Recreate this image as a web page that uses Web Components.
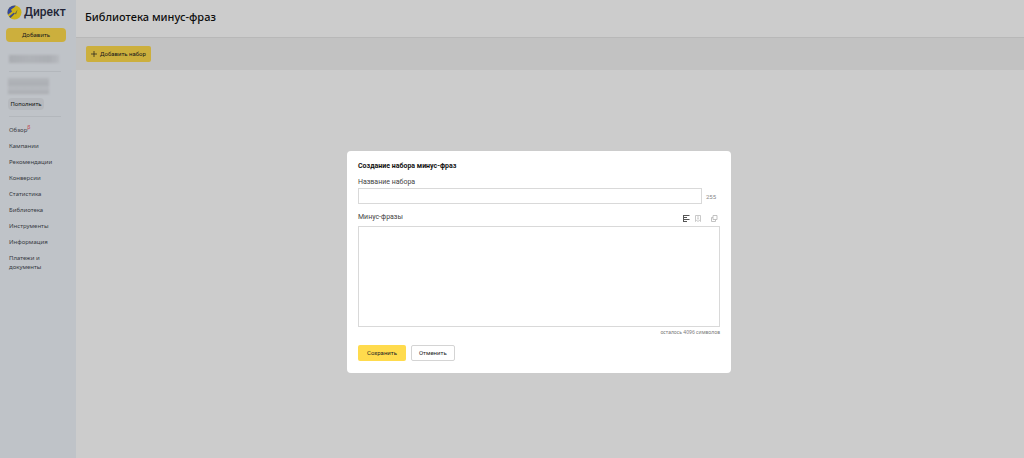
<!DOCTYPE html>
<html lang="ru">
<head>
<meta charset="utf-8">
<title>Библиотека минус-фраз</title>
<style>
html,body{height:100%}
body{margin:0;background:#fff;color:#111;font-family:Roboto,"Noto Sans",sans-serif;font-size:6px}
</style>
</head>
<body>
<direct-app>
  <direct-sidebar slot="side">
    <nav-item>Обзор<sup>β</sup></nav-item>
    <nav-item>Кампании</nav-item>
    <nav-item>Рекомендации</nav-item>
    <nav-item>Конверсии</nav-item>
    <nav-item>Статистика</nav-item>
    <nav-item>Библиотека</nav-item>
    <nav-item>Инструменты</nav-item>
    <nav-item>Информация</nav-item>
    <nav-item>Платежи и документы</nav-item>
  </direct-sidebar>
  <library-page heading="Библиотека минус-фраз"></library-page>
</direct-app>
<phrase-dialog></phrase-dialog>
<script>
const define = (name, html, setup) => customElements.define(name, class extends HTMLElement {
  constructor() {
    super();
    this.attachShadow({mode: 'open'}).innerHTML = html;
  }
  connectedCallback() { if (setup) setup(this, this.shadowRoot); }
});

define('direct-app', `
<style>
:host{display:grid;grid-template-columns:76px minmax(0,1fr);min-height:100%}
main{min-width:0}
</style>
<slot name="side"></slot><main><slot></slot></main>`);

define('direct-logo', `
<style>
:host{display:flex;align-items:center;gap:2px;color:#2b2f45;font:500 12px/16px Roboto,sans-serif}
svg{display:block;flex:none}
</style>
<svg width="15" height="15" viewBox="0 0 30 30" aria-hidden="true">
<defs><clipPath id="c"><circle cx="15" cy="15" r="14"/></clipPath></defs>
<g clip-path="url(#c)"><rect width="30" height="30" fill="#ffdf22"/>
<path d="M0 0H19L14 5L8 9L10 13L1 20H0Z" fill="#3f58c4"/>
<path d="M4 23L14 15L16 17L7 26Z" fill="#4a5cae"/>
<path d="M14 15L10 13L21 9L18 19Z" fill="#ffdf22"/>
<path d="M21 9L18 19L16 17Z" fill="#6c6f55"/></g></svg>
<span>Директ</span>`);

define('ui-button', `
<style>
:host{display:inline-block}
button{display:flex;align-items:center;justify-content:center;gap:3px;box-sizing:border-box;width:100%;height:16px;margin:0;padding:0 8px;border:1px solid transparent;border-radius:2px;background:#ffdb4d;color:#222;font:inherit;line-height:8px;white-space:nowrap;cursor:pointer}
:host([kind=round]) button{height:14px;border-radius:4px}
:host([kind=icon]) button{padding:0 4px}
:host([kind=soft]) button{height:12px;padding:0 3px;border-radius:4px;background:#e4e8ee}
:host([kind=outline]) button{padding:0 7px;background:#fff;border-color:#d4d4d4}
</style>
<button type="button"><slot></slot></button>`);

define('nav-item', `
<style>
:host{display:block}
a{display:block;color:#484c54;text-decoration:none;font-size:6px;line-height:9px}
::slotted(sup){color:#f05060;font-size:5px;line-height:0}
</style>
<a href="#"><slot></slot></a>`);

define('direct-sidebar', `
<style>
:host{display:block;box-sizing:border-box;background:#eff4fa;padding:4px 6px 8px;font-family:"Noto Sans",sans-serif}
direct-logo{margin-left:1px}
.add{display:block;margin:8px 4px 0 0}
.rule{height:1px;margin:0 9px 0 3px;background:#e0e5eb}
.veil{overflow:hidden;margin-left:3px;filter:blur(1px)}
.name{width:50px;height:8px;margin-top:13px;margin-bottom:8px;background:linear-gradient(90deg,#d5d9df,#dce0e6 40%,#d7dbe1 80%,#e4e8ee)}
.sum{width:41px;height:16px;margin:6px 0 4px 2px;background:linear-gradient(180deg,#e0e4ea,#d8dce2 40%,#e6eaf0 60%,#d5d9df)}
.fill{margin-left:2px;display:block;width:36px;margin-bottom:6px;font-family:Roboto,sans-serif}
nav{display:flex;flex-direction:column;gap:7px;margin:9px 12px 0 3px}
</style>
<direct-logo></direct-logo>
<ui-button class="add" kind="round">Добавить</ui-button>
<div class="veil name"></div>
<div class="rule"></div>
<div class="veil sum"></div>
<ui-button class="fill" kind="soft">Пополнить</ui-button>
<div class="rule"></div>
<nav><slot></slot></nav>`);

define('library-page', `
<style>
:host{display:block}
header{padding:9px 9px 12px}
h1{margin:0;font:500 11px/16px "Noto Sans",sans-serif;color:#111}
.bar{display:flex;padding:8px 10px;border-top:1px solid #e6e6e6;background:#f3f3f3}
svg{display:block}
</style>
<header><h1></h1></header>
<div class="bar"><ui-button kind="icon"><svg width="6" height="6" viewBox="0 0 6 6" stroke="#222" stroke-width=".7" aria-hidden="true"><path d="M3 0V6M0 3H6"/></svg>Добавить набор</ui-button></div>`,
(el, root) => { root.querySelector('h1').textContent = el.getAttribute('heading'); });

define('phrase-dialog', `
<style>
:host{position:fixed;inset:0;display:flex;justify-content:center;align-items:flex-start;box-sizing:border-box;padding:151px 0 16px 54px;background:rgba(0,0,0,.2);overflow:auto}
form{box-sizing:border-box;width:384px;max-width:100%;padding:11px 11px 12px;border-radius:4px;background:#fff}
h2{margin:0 0 7px;font-size:7px;line-height:9px;font-weight:700;color:#111}
label{display:block;font-size:7px;line-height:9px;color:#444}
.row{display:flex;align-items:center;gap:4px;margin:1px 0 9px}
input,textarea{display:block;box-sizing:border-box;margin:0;border:1px solid #d9d9d9;border-radius:0;background:#fff;padding:2px 4px;font:inherit;outline:0;resize:none}
input{flex:1;min-width:0;height:16px}
.count{width:14px;font-size:6px;line-height:9px;color:#888}
.head{display:flex;align-items:center;justify-content:space-between;margin-bottom:4px}
.tools{display:flex;gap:4px;padding-right:2px}
.tools button{display:block;border:0;background:none;margin:0;padding:0;width:8px;height:8px;color:#bbb}
.tools button:first-child{color:#555}
.tools button:last-child{margin-left:4px}
.tools svg{display:block;fill:none;stroke:currentColor}
textarea{width:100%;height:101px}
.left{margin:1px 0 9px;text-align:right;font:5px/8px "Noto Sans",sans-serif;color:#777}
.actions{display:flex;gap:5px}
</style>
<form role="dialog" aria-labelledby="t">
<h2 id="t">Создание набора минус-фраз</h2>
<label for="n">Название набора</label>
<div class="row"><input id="n" type="text" maxlength="255"><span class="count">255</span></div>
<div class="head"><label for="p">Минус-фразы</label>
<div class="tools">
<button type="button" aria-label="По строкам"><svg width="8" height="8" viewBox="0 0 8 8"><path d="M1 1.5H7.5M1 3.5H5M1 5.5H7.5M1 7.5H5M1.5 1V8"/></svg></button>
<button type="button" aria-label="Сортировка"><svg width="8" height="8" viewBox="0 0 8 8" stroke-width=".8"><path d="M1.5 1.5H6.5V7.5L5.3 6.3L4 7.5L2.7 6.3L1.5 7.5ZM3 3H5M3 4.8H5"/></svg></button>
<button type="button" aria-label="Копировать"><svg width="8" height="8" viewBox="0 0 8 8" stroke-width=".9"><path d="M3 1.5H7V5.5H3ZM5.5 5.5V7.5H1.5V3.5H3"/></svg></button>
</div></div>
<textarea id="p"></textarea>
<div class="left">осталось 4096 символов</div>
<div class="actions"><ui-button>Сохранить</ui-button><ui-button kind="outline">Отменить</ui-button></div>
</form>`);
</script>
</body>
</html>
